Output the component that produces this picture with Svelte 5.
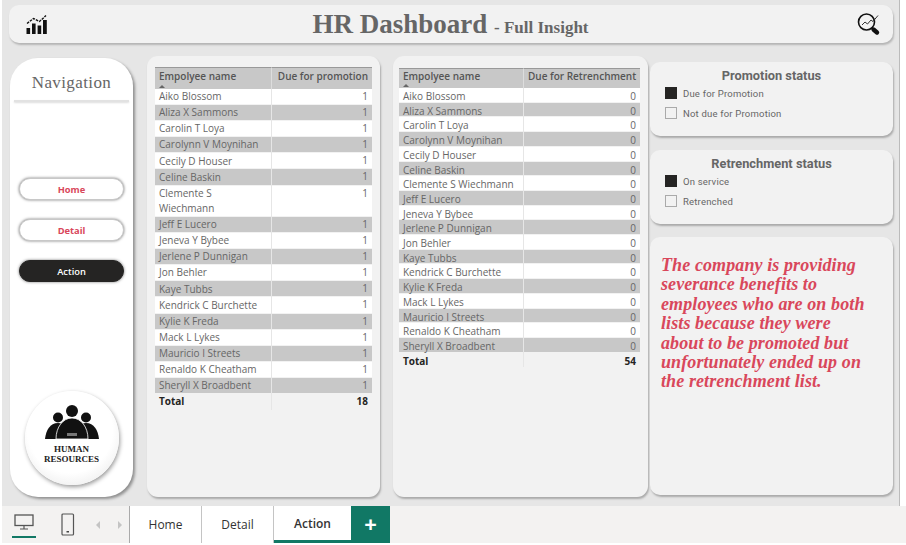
<script>
  const names = [
    "Aiko Blossom", "Aliza X Sammons", "Carolin T Loya", "Carolynn V Moynihan", "Cecily D Houser",
    "Celine Baskin", "Clemente S Wiechmann", "Jeff E Lucero", "Jeneva Y Bybee", "Jerlene P Dunnigan",
    "Jon Behler", "Kaye Tubbs", "Kendrick C Burchette", "Kylie K Freda", "Mack L Lykes",
    "Mauricio I Streets", "Renaldo K Cheatham", "Sheryll X Broadbent"
  ];
  const tabs = ["Home", "Detail", "Action"];
</script>

<div class="page">
  <div class="canvas">
    <header class="topbar">
      <svg class="logo" viewBox="0 0 22 20" width="22" height="20">
        <rect x="0.5" y="14" width="3.6" height="6" />
        <rect x="6" y="9.5" width="3.6" height="10.5" />
        <rect x="11.6" y="11.5" width="3.6" height="8.5" />
        <rect x="17" y="6" width="3.8" height="14" />
        <path d="M1 9.5 7.5 4.5 13.5 7.5 20 1.5" fill="none" stroke="#111" stroke-width="1.4" stroke-dasharray="2.6 1" />
      </svg>
      <h1>HR Dashboard <small>- Full Insight</small></h1>
      <svg class="lens" viewBox="0 0 24 24" width="24" height="24">
        <circle cx="9.5" cy="10" r="8" fill="none" stroke="#111" stroke-width="1.6" />
        <path d="M5 13 8 10 10.5 12 14 8 16 9.5 21 3.5" fill="none" stroke="#333" stroke-width="1" />
        <path d="M16.5 17.5 20 20.5" stroke="#111" stroke-width="4.4" stroke-linecap="round" />
      </svg>
    </header>

    <div class="content">
      <nav class="nav">
        <h2>Navigation</h2>
        <div class="rule"></div>
        <div class="buttons">
          <button class="pill">Home</button>
          <button class="pill">Detail</button>
          <button class="pill on">Action</button>
        </div>
        <div class="badge">
          <svg viewBox="0 0 54 36" width="54" height="36">
            <circle cx="27" cy="6" r="6" />
            <circle cx="13" cy="12.5" r="5" />
            <circle cx="41" cy="12.5" r="5" />
            <path d="M0 34C1 25 5 18 13 18c3 0 6 1 8 4v12Z" />
            <path d="M54 34C53 25 49 18 41 18c-3 0-6 1-8 4v12Z" />
            <path d="M11 34C11 22 18 13 27 13s16 9 16 21Z" stroke="#fff" stroke-width="0.8" />
            <rect x="22" y="28" width="10" height="3" fill="#777" />
          </svg>
          <span>HUMAN<br />RESOURCES</span>
        </div>
      </nav>

      <section class="panel first">
        <table>
          <thead>
            <tr>
              <th class="name">Empolyee name<i class="sort"></i></th>
              <th class="num">Due for promotion</th>
            </tr>
          </thead>
          <tbody>
            {#each names as name}
              <tr>
                <td class="name">{name}</td>
                <td class="num">1</td>
              </tr>
            {/each}
            <tr class="total">
              <td class="name">Total</td>
              <td class="num">18</td>
            </tr>
          </tbody>
        </table>
      </section>

      <section class="panel second">
        <table>
          <thead>
            <tr>
              <th class="name">Empolyee name<i class="sort"></i></th>
              <th class="num">Due for Retrenchment</th>
            </tr>
          </thead>
          <tbody>
            {#each names as name}
              <tr>
                <td class="name">{name}</td>
                <td class="num">0</td>
              </tr>
            {/each}
            <tr class="total">
              <td class="name">Total</td>
              <td class="num">54</td>
            </tr>
          </tbody>
        </table>
      </section>

      <aside class="side">
        <div class="slicer">
          <h3>Promotion status</h3>
          <div class="opt"><i class="box full"></i>Due for Promotion</div>
          <div class="opt"><i class="box"></i>Not due for Promotion</div>
        </div>
        <div class="slicer">
          <h3>Retrenchment status</h3>
          <div class="opt"><i class="box full"></i>On service</div>
          <div class="opt"><i class="box"></i>Retrenched</div>
        </div>
        <div class="note">
          The company is providing severance benefits to employees who are on both lists because they were about to be promoted but unfortunately ended up on the retrenchment list.
        </div>
      </aside>
    </div>
  </div>

  <footer class="tabbar">
    <div class="views">
      <div class="view active">
        <svg viewBox="0 0 20 16" width="20" height="16">
          <rect x="1" y="1" width="18" height="10.5" fill="none" stroke="#555" stroke-width="1.3" />
          <path d="M10 12v2.5M6 15h8" stroke="#555" stroke-width="1.2" />
        </svg>
      </div>
      <div class="view phone">
        <svg viewBox="0 0 14 24" width="14" height="24">
          <rect x="1" y="1" width="11.5" height="21" rx="1" fill="none" stroke="#555" stroke-width="1.2" />
          <rect x="5.5" y="18" width="2.5" height="1.5" fill="#444" />
        </svg>
      </div>
      <span class="arrow left"></span>
      <span class="arrow right"></span>
    </div>
    {#each tabs as tab}
      <div class="tab" class:current={tab === "Action"}>{tab}</div>
    {/each}
    <div class="add">+</div>
  </footer>
</div>

<style>
  :global(body) {
    margin: 0;
    background: #fff;
  }

  .page {
    width: 906px;
    height: 545px;
    overflow: hidden;
    display: flex;
    flex-direction: column;
    font-family: "Open Sans", sans-serif;
  }

  .canvas {
    height: 506px;
    width: 898px;
    margin-left: 2px;
    box-sizing: border-box;
    background: #e6e6e6;
    border-right: 1px solid #bbb;
    padding: 5px 6px 0 7px;
  }

  .topbar {
    height: 38px;
    background: #f2f2f2;
    border-radius: 10px;
    box-shadow: 1px 2px 2px #b5b5b5;
    display: flex;
    align-items: center;
    padding: 0 12px 0 17px;
  }

  .logo {
    fill: #111;
  }

  h1 {
    flex: 1;
    margin: 0;
    padding-right: 4px;
    text-align: center;
    font: bold 27px "Liberation Serif", serif;
    color: #666;
  }

  h1 small {
    font-size: 17px;
  }

  .content {
    display: flex;
    margin-top: 15px;
    margin-left: 1px;
  }

  .nav {
    width: 123px;
    height: 439px;
    flex: none;
    background: #fff;
    border-radius: 28px;
    box-shadow: 2px 2px 3px #8f8f8f;
    display: flex;
    flex-direction: column;
    align-items: center;
  }

  .nav h2 {
    margin: 15px 0 0;
    font: normal 17px "Liberation Serif", serif;
    letter-spacing: 0.4px;
    color: #666;
  }

  .rule {
    width: 115px;
    height: 2px;
    margin-top: 7px;
    background: #e2e2e2;
    box-shadow: 0 1px 2px #ddd;
  }

  .buttons {
    display: flex;
    flex-direction: column;
    gap: 19px;
    margin-top: 76px;
  }

  .pill {
    width: 105px;
    height: 22px;
    padding: 0;
    border: 1px solid #c8c8c8;
    border-radius: 11px;
    background: #fff;
    box-shadow: 0 0 3px #777;
    color: #d9475b;
    font: 700 9.3px "Open Sans", sans-serif;
  }

  .pill.on {
    background: #252423;
    border-color: #252423;
    color: #fff;
    font-weight: 600;
  }

  .badge {
    width: 94px;
    height: 94px;
    margin-top: 109px;
    border-radius: 50%;
    background: radial-gradient(circle at 48% 42%, #fff 58%, #eee 82%, #d4d4d4);
    box-shadow: 1px 2px 4px #999;
    display: flex;
    flex-direction: column;
    align-items: center;
    padding-top: 14px;
    box-sizing: border-box;
  }

  .badge svg {
    fill: #111;
  }

  .badge span {
    font: bold 9px/10px "Liberation Serif", serif;
    text-align: center;
    color: #222;
    margin-top: 3px;
  }

  .panel {
    height: 441px;
    margin-top: -2px;
    box-sizing: border-box;
    background: #f2f2f2;
    border-radius: 11px;
    box-shadow: 1px 2px 2px #aaa;
    flex: none;
  }

  .first {
    width: 233px;
    margin-left: 14px;
    padding: 11px 8px 0;
  }

  .second {
    width: 255px;
    margin-left: 13px;
    padding: 12px 8px 0 6px;
  }

  table {
    width: 100%;
    table-layout: fixed;
    border-collapse: separate;
    border-spacing: 0;
    font-size: 10px;
    color: #666;
  }

  th {
    box-sizing: border-box;
    height: 22px;
    background: #c8c8c8;
    border-top: 1px solid #999;
    border-right: 1px solid #ddd;
    font-weight: 600;
    color: #555;
    vertical-align: top;
    padding: 1px 4px 0;
    white-space: nowrap;
    position: relative;
  }

  .second th {
    height: 20px;
    padding-top: 0;
  }

  th.name {
    text-align: left;
  }

  th.num {
    border-right: 0;
    text-align: right;
  }

  .sort {
    position: absolute;
    left: 4px;
    bottom: 1px;
    border: 3px solid transparent;
    border-top: 0;
    border-bottom: 3px solid #666;
  }

  td {
    box-sizing: border-box;
    padding: 0 10px 0 4px;
    background: #fff;
    border-right: 1px solid #e6e6e6;
    box-shadow: inset 0 -1px #f2f2f2;
  }

  .first td {
    height: 16.1px;
    line-height: 15.7px;
  }

  .second td {
    height: 14.7px;
    line-height: 12.7px;
    padding-top: 2px;
    white-space: nowrap;
  }

  td.num {
    text-align: right;
    vertical-align: top;
    border-right: 0;
    padding-left: 0;
    padding-right: 4px;
  }

  tbody tr:nth-child(even) td {
    background: #c8c8c8;
  }

  .total td,
  tbody tr.total td {
    background: none;
    box-shadow: none;
    font-weight: 700;
    color: #252423;
  }

  .first .name {
    width: 117px;
  }

  .second .name {
    width: 125px;
  }

  .side {
    width: 243px;
    margin-left: 2px;
    display: flex;
    flex-direction: column;
    flex: none;
    margin-top: 4px;
  }

  .slicer {
    height: 74px;
    box-sizing: border-box;
    background: #f2f2f2;
    border-radius: 10px;
    box-shadow: 1px 2px 2px #aaa;
    padding: 7px 15px 0;
    margin-bottom: 14px;
    font-family: Roboto, sans-serif;
    color: #666;
  }

  .slicer h3 {
    margin: 0;
    text-align: center;
    font-size: 12.8px;
    line-height: 14px;
    font-weight: 700;
  }

  .opt {
    display: flex;
    align-items: center;
    height: 20px;
    font-size: 9.5px;
    letter-spacing: 0.2px;
  }

  .box {
    width: 10px;
    height: 10px;
    border: 1px solid #aaa;
    margin-right: 6px;
    box-sizing: content-box;
  }

  .box.full {
    background: #252423;
    border-color: #252423;
  }

  .note {
    height: 258px;
    margin-top: -1px;
    box-sizing: border-box;
    background: #f2f2f2;
    border-radius: 10px;
    box-shadow: 1px 2px 2px #aaa;
    padding: 19px 24px 0 11px;
    font: italic bold 18px/19.4px "Liberation Serif", serif;
    letter-spacing: 0.1px;
    color: #d9475b;
  }

  .tabbar {
    height: 37px;
    margin-left: 2px;
    background: #f3f2f1;
    display: flex;
  }

  .views {
    width: 127px;
    display: flex;
    align-items: center;
    border-right: 1px solid #aaa;
    flex: none;
  }

  .view {
    display: flex;
    justify-content: center;
  }

  .view.active {
    width: 24px;
    margin-left: 10px;
    padding: 3px 0 6px;
    border-bottom: 2px solid #117865;
  }

  .view.phone {
    margin-left: 25px;
  }

  .arrow {
    border: 4px solid transparent;
  }

  .arrow.left {
    border-right-color: #c4c4c4;
    border-left: 0;
    margin-left: 21px;
  }

  .arrow.right {
    border-left-color: #c4c4c4;
    border-right: 0;
    margin-left: 18px;
  }

  .tab {
    background: #fff;
    width: 72px;
    display: flex;
    align-items: center;
    justify-content: center;
    font: 12px "Open Sans", sans-serif;
    color: #333;
    border-right: 1px solid #c4c4c4;
    box-sizing: border-box;
    flex: none;
  }

  .tab.current {
    width: 77px;
    border-right: 0;
    border-bottom: 3px solid #117865;
    font-weight: 600;
  }

  .add {
    width: 39px;
    background: #117865;
    color: #fff;
    font: bold 22px/35px "Open Sans", sans-serif;
    text-align: center;
  }
</style>
